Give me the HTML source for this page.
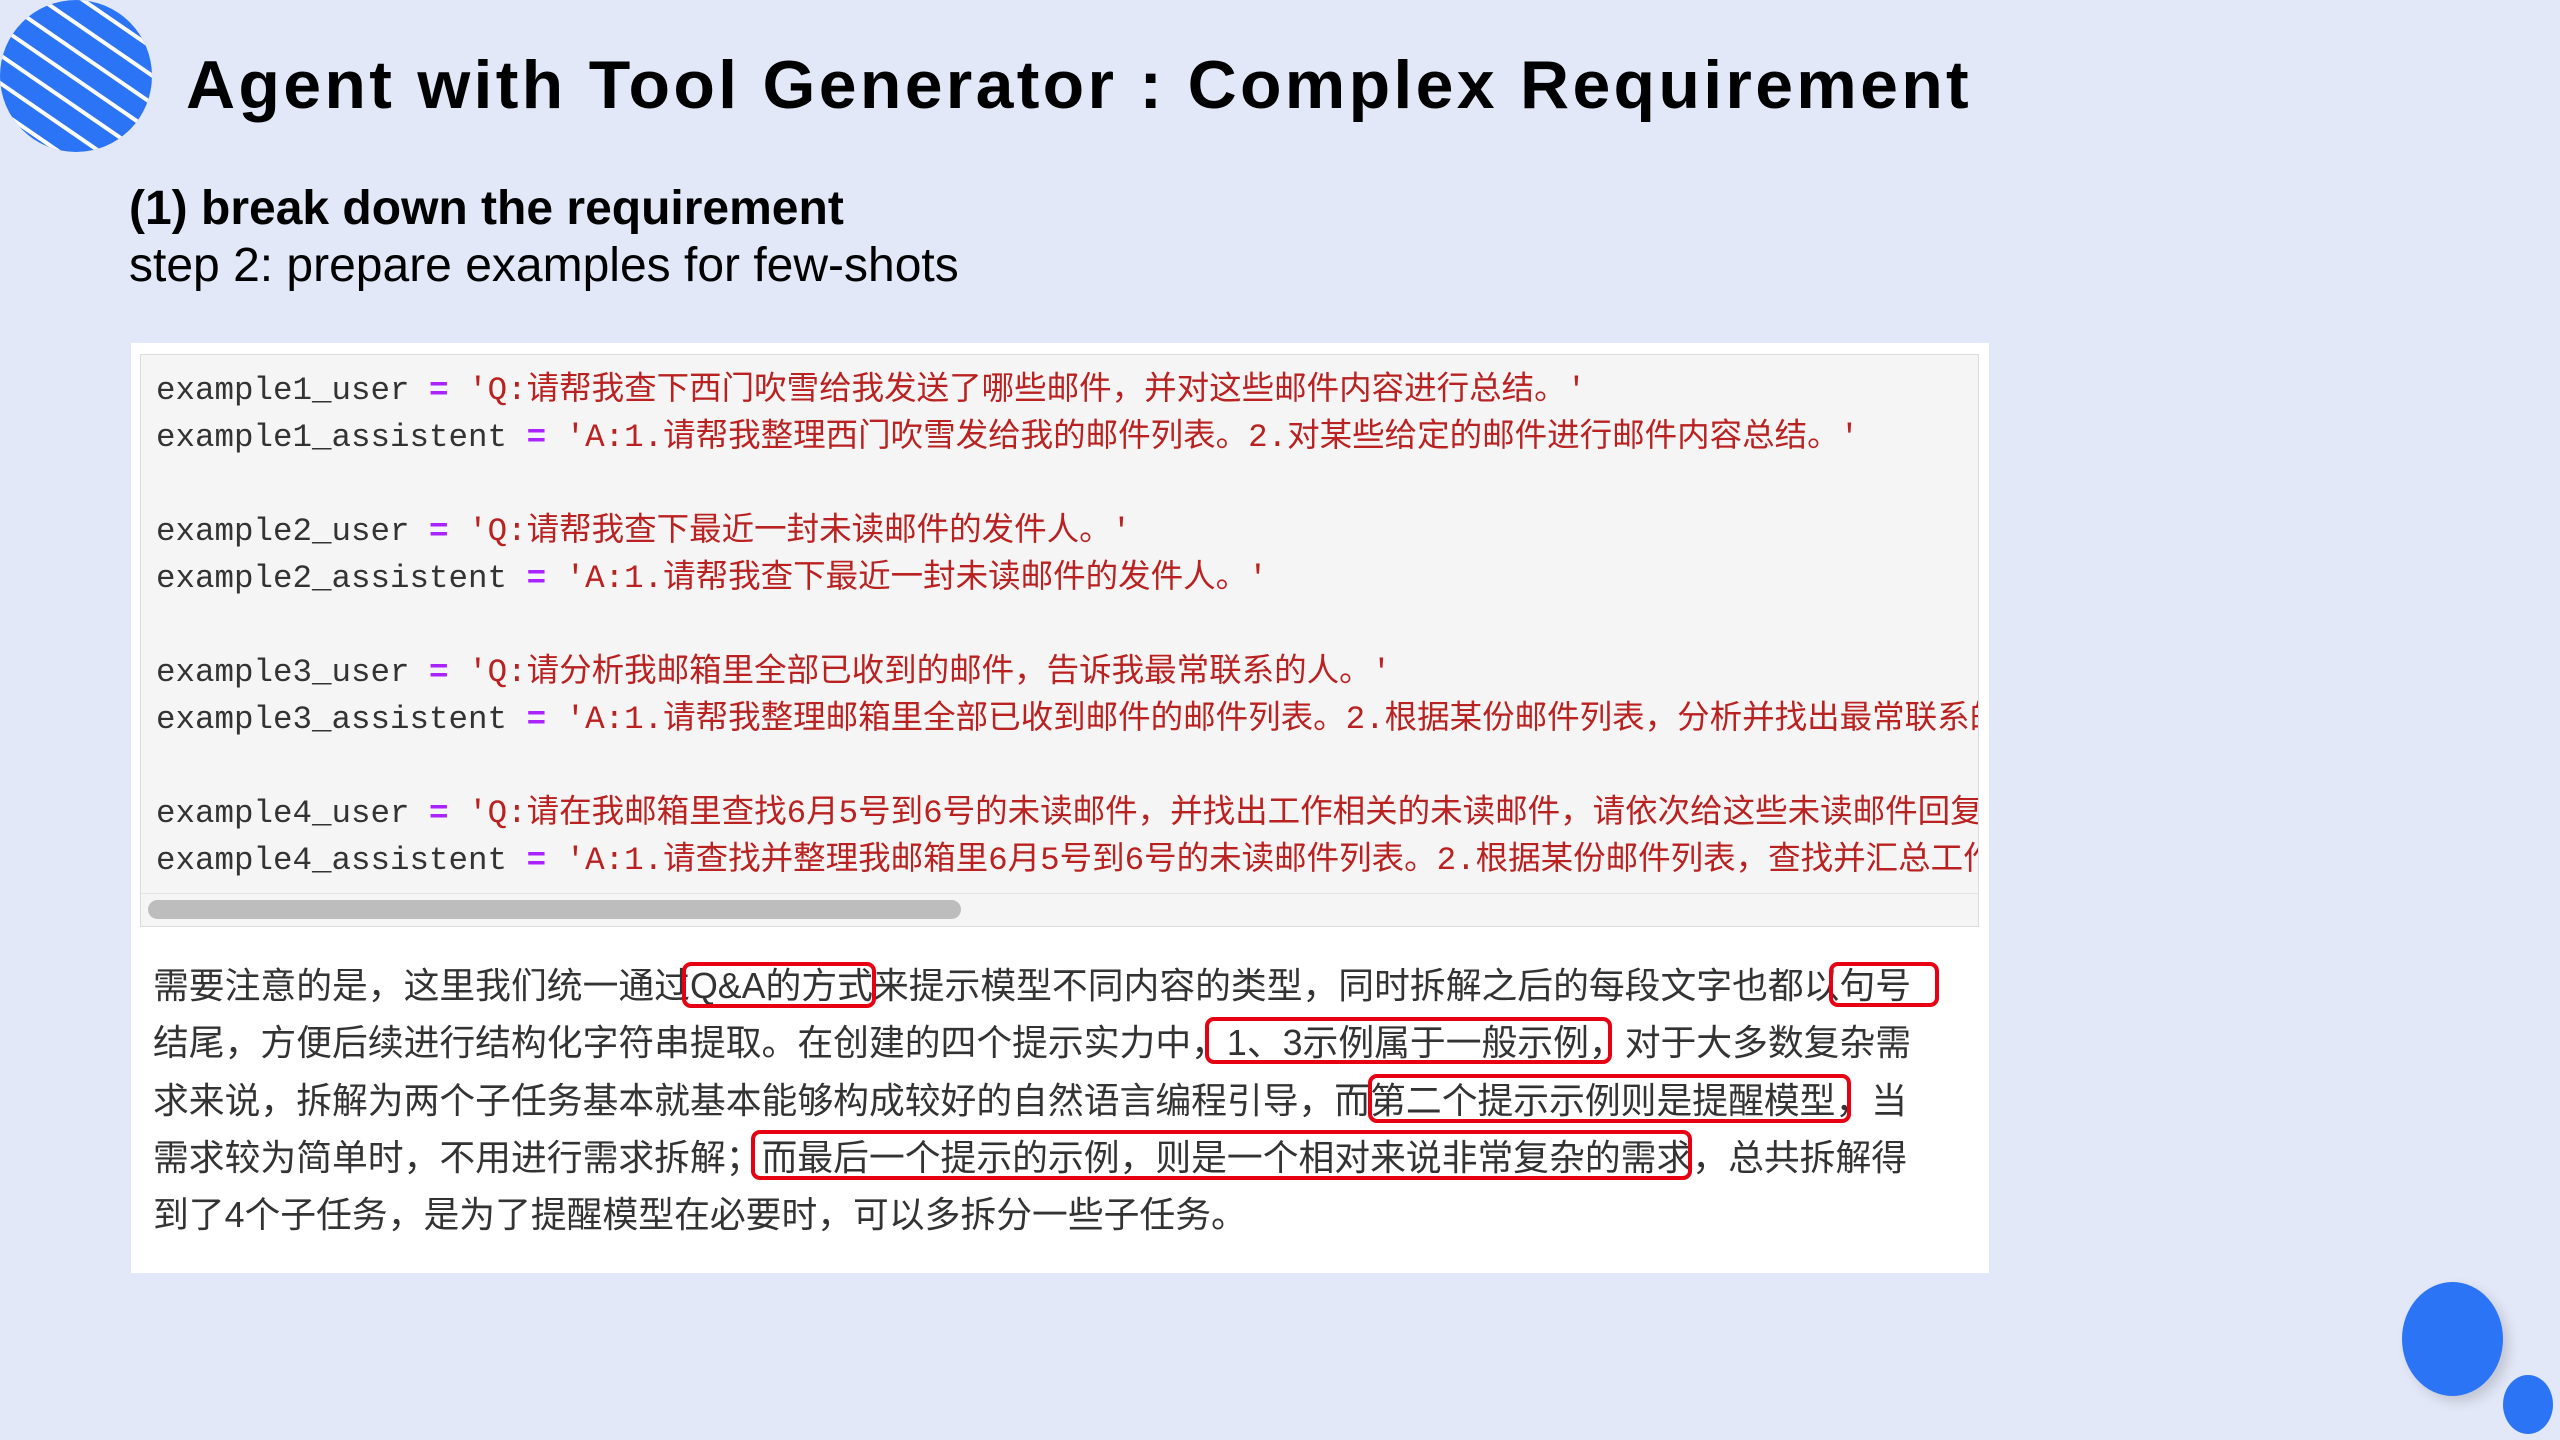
<!DOCTYPE html>
<html><head><meta charset="utf-8"><style>
html,body{margin:0;padding:0}
body{width:2560px;height:1440px;background:#e3e8f8;position:relative;overflow:hidden;font-family:"Liberation Sans","Noto Sans CJK SC",sans-serif}
.title{position:absolute;left:186px;top:46px;font-size:68px;font-weight:bold;letter-spacing:3.3px;color:#000;white-space:nowrap}
.h1{position:absolute;left:129px;top:181px;font-size:48px;font-weight:bold;color:#000;white-space:nowrap}
.h2{position:absolute;left:129px;top:238px;font-size:48px;color:#000;white-space:nowrap}
.panel{position:absolute;left:131px;top:343px;width:1858px;height:930px;background:#fff}
.code{position:absolute;left:140px;top:354px;width:1837px;height:571px;background:#f5f5f5;border:1px solid #dcdcdc;overflow:hidden}
.code pre{margin:0;position:absolute;left:15px;top:12px;font-family:"Liberation Mono","Noto Sans CJK SC",monospace;font-size:32.5px;line-height:47px;color:#333}
.e{color:#aa22ff;font-weight:bold}.s{color:#ba2121}
.sb{position:absolute;left:7px;top:545px;width:813px;height:19px;background:#bdbdbd;border-radius:10px}
.sbline{position:absolute;left:0;top:538px;width:100%;height:1px;background:#e4e4e4}
.para{position:absolute;left:153px;top:958px;font-size:35.8px;line-height:57.3px;color:#333;white-space:nowrap;font-family:"Liberation Sans","Noto Sans CJK SC",sans-serif}
.box{position:absolute;border:4px solid #e60012;border-radius:9px;box-sizing:border-box}
.c{position:absolute;background:#2b74f6;border-radius:50%}
</style></head><body>
<svg style="position:absolute;left:0;top:0" width="154" height="154" viewBox="0 0 154 154">
<defs><clipPath id="cp"><ellipse cx="76" cy="76" rx="76" ry="76"/></clipPath></defs>
<ellipse cx="76" cy="76" rx="76" ry="76" fill="#2b74f6"/>
<g clip-path="url(#cp)" stroke="#fff" stroke-width="4">
<line x1="-80" y1="-140" x2="240" y2="80"/><line x1="-80" y1="-112" x2="240" y2="108"/><line x1="-80" y1="-84" x2="240" y2="136"/><line x1="-80" y1="-56" x2="240" y2="164"/><line x1="-80" y1="-28" x2="240" y2="192"/><line x1="-80" y1="0" x2="240" y2="220"/><line x1="-80" y1="28" x2="240" y2="248"/><line x1="-80" y1="56" x2="240" y2="276"/><line x1="-80" y1="84" x2="240" y2="304"/><line x1="-80" y1="112" x2="240" y2="332"/><line x1="-80" y1="140" x2="240" y2="360"/>
</g></svg>
<div class="title">Agent with Tool Generator : Complex Requirement</div>
<div class="h1">(1) break down the requirement</div>
<div class="h2">step 2: prepare examples for few-shots</div>
<div class="panel"></div>
<div class="code"><pre>example1_user <span class="e">=</span> <span class="s">'Q:请帮我查下西门吹雪给我发送了哪些邮件，并对这些邮件内容进行总结。'</span>
example1_assistent <span class="e">=</span> <span class="s">'A:1.请帮我整理西门吹雪发给我的邮件列表。2.对某些给定的邮件进行邮件内容总结。'</span>

example2_user <span class="e">=</span> <span class="s">'Q:请帮我查下最近一封未读邮件的发件人。'</span>
example2_assistent <span class="e">=</span> <span class="s">'A:1.请帮我查下最近一封未读邮件的发件人。'</span>

example3_user <span class="e">=</span> <span class="s">'Q:请分析我邮箱里全部已收到的邮件，告诉我最常联系的人。'</span>
example3_assistent <span class="e">=</span> <span class="s">'A:1.请帮我整理邮箱里全部已收到邮件的邮件列表。2.根据某份邮件列表，分析并找出最常联系的人。'</span>

example4_user <span class="e">=</span> <span class="s">'Q:请在我邮箱里查找6月5号到6号的未读邮件，并找出工作相关的未读邮件，请依次给这些未读邮件回复。'</span>
example4_assistent <span class="e">=</span> <span class="s">'A:1.请查找并整理我邮箱里6月5号到6号的未读邮件列表。2.根据某份邮件列表，查找并汇总工作相关邮件。'</span></pre>
<div class="sbline"></div><div class="sb"></div></div>
<div class="para">需要注意的是，这里我们统一通过Q&amp;A的方式来提示模型不同内容的类型，同时拆解之后的每段文字也都以句号<br>结尾，方便后续进行结构化字符串提取。在创建的四个提示实力中，1、3示例属于一般示例，对于大多数复杂需<br>求来说，拆解为两个子任务基本就基本能够构成较好的自然语言编程引导，而第二个提示示例则是提醒模型，当<br>需求较为简单时，不用进行需求拆解；而最后一个提示的示例，则是一个相对来说非常复杂的需求，总共拆解得<br>到了4个子任务，是为了提醒模型在必要时，可以多拆分一些子任务。</div>
<div class="box" style="left:682px;top:962px;width:194px;height:46px"></div>
<div class="box" style="left:1829px;top:962px;width:110px;height:45px"></div>
<div class="box" style="left:1205px;top:1017px;width:407px;height:47px"></div>
<div class="box" style="left:1368px;top:1074px;width:483px;height:49px"></div>
<div class="box" style="left:751px;top:1130px;width:941px;height:50px"></div>
<div class="c" style="left:2402px;top:1282px;width:101px;height:114px;box-shadow:6px 6px 12px rgba(0,0,0,.15)"></div>
<div class="c" style="left:2503px;top:1375px;width:50px;height:59px"></div>
</body></html>
